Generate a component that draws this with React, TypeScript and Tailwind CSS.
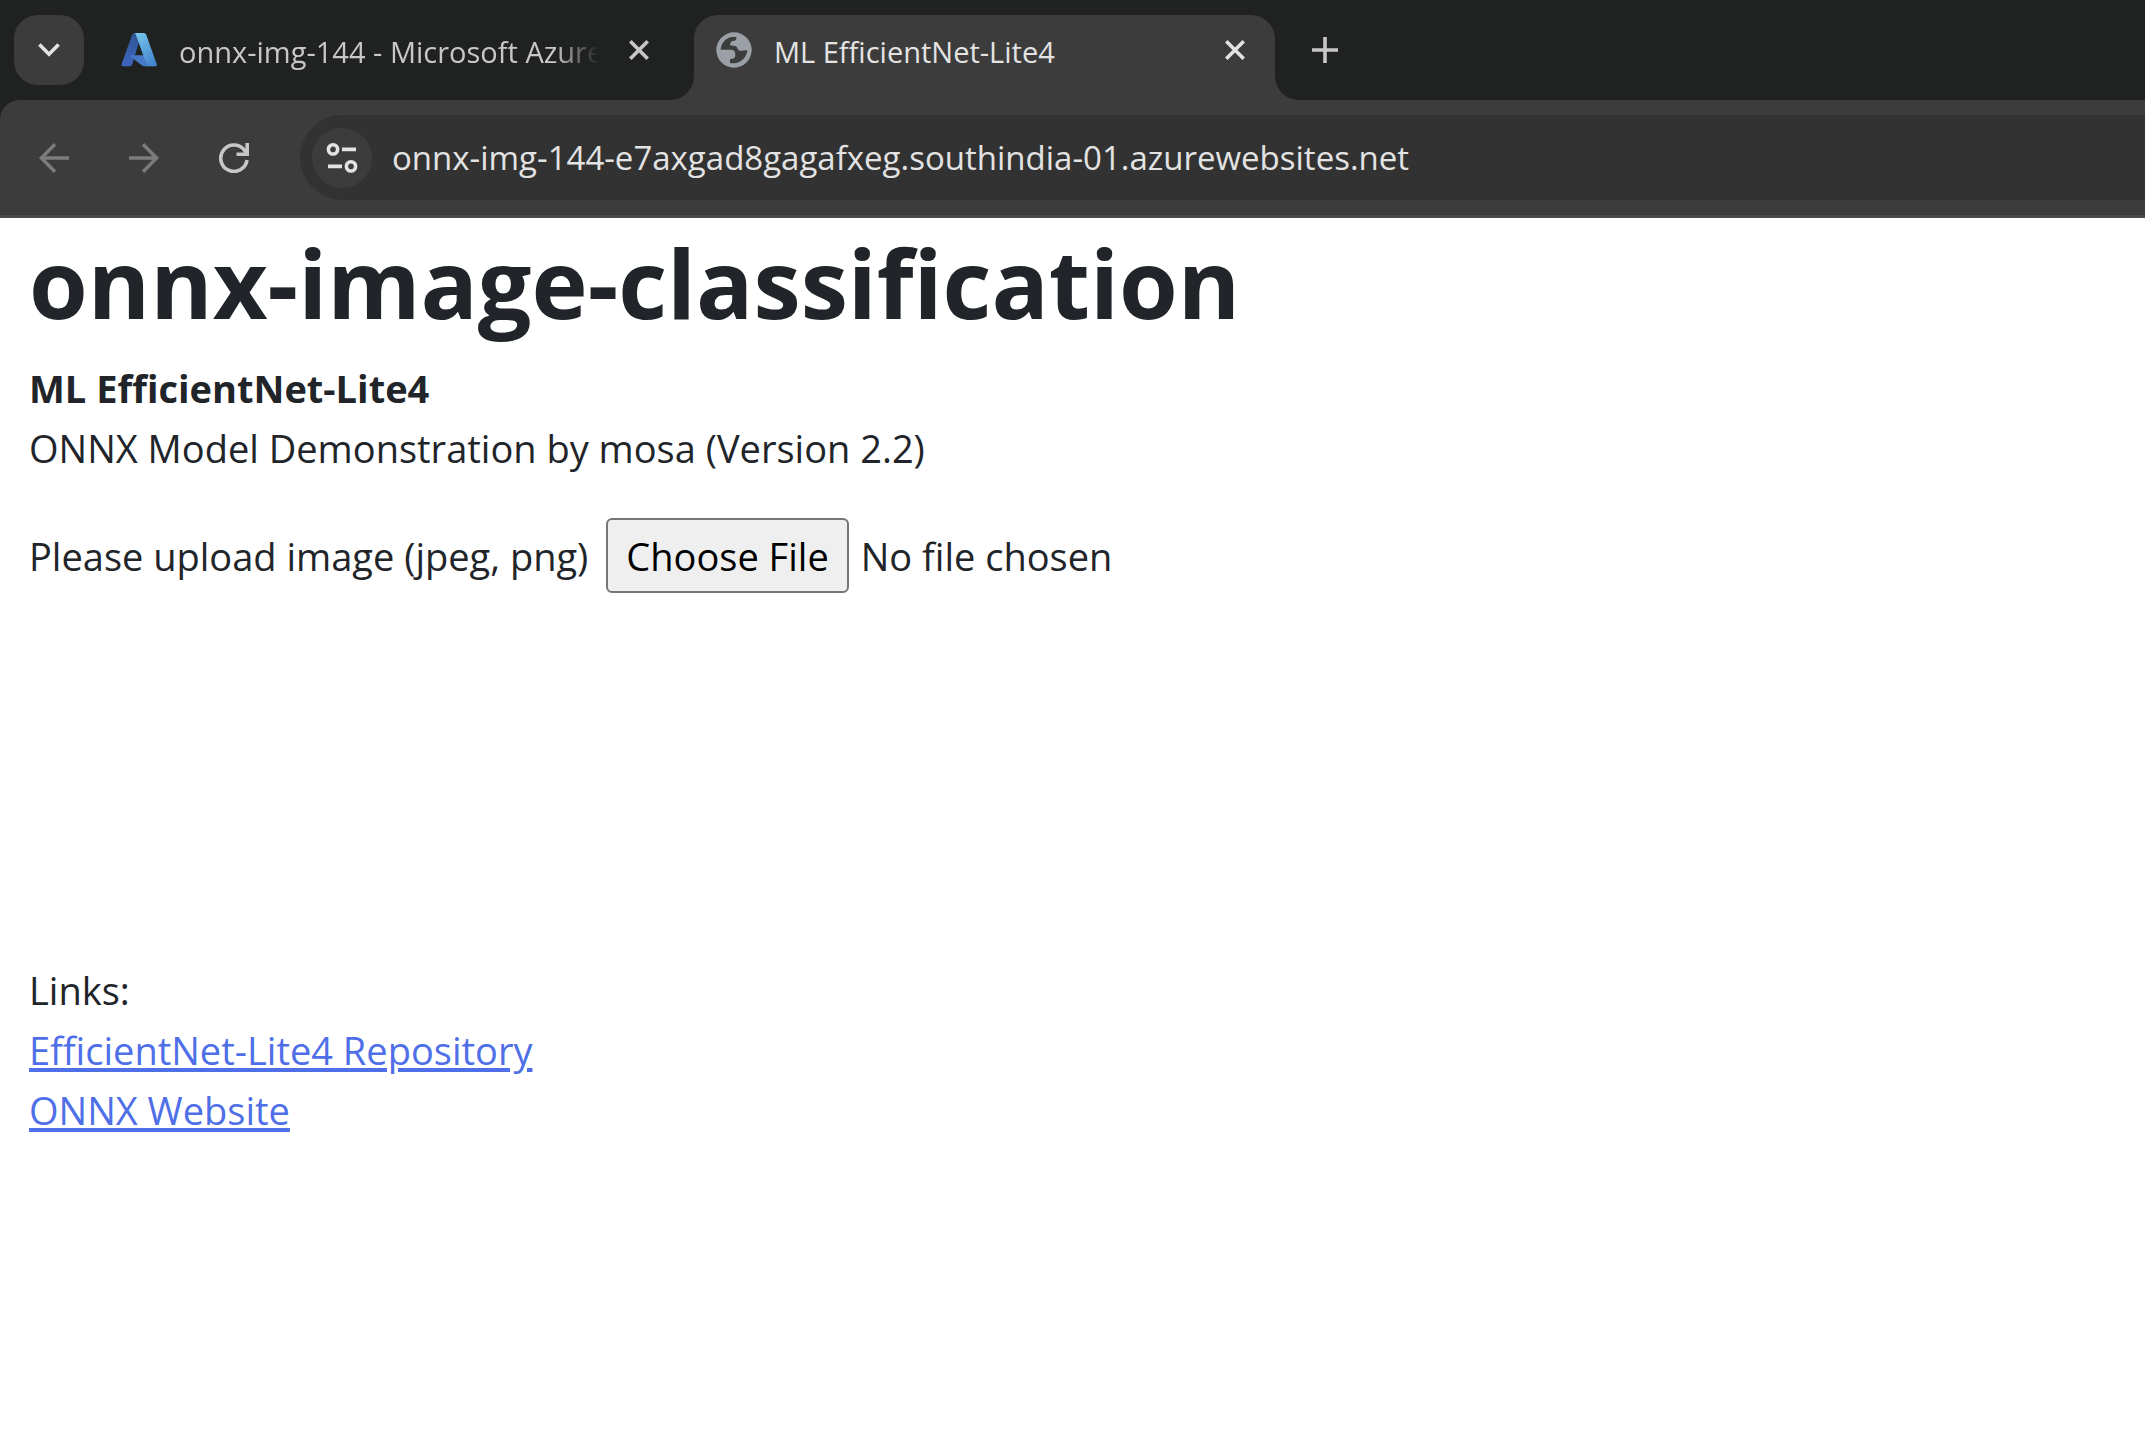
import React from "react";

function AzureLogo() {
  return (
    <svg viewBox="0 0 108 108" className="size-9 shrink-0" aria-hidden="true">
      <defs>
        <linearGradient id="azure-left" x1="0.6" y1="0" x2="0.3" y2="1">
          <stop offset="0" stopColor="#2f5597" />
          <stop offset="1" stopColor="#3f66bd" />
        </linearGradient>
        <linearGradient id="azure-right" x1="0.2" y1="0" x2="0.7" y2="1">
          <stop offset="0" stopColor="#74c3ea" />
          <stop offset="1" stopColor="#4484cf" />
        </linearGradient>
      </defs>
      <path d="M41 3H62L48 50L33 98Q31 103 26 103H5Q0 102 2 96L33 9Q35 3 41 3Z" fill="url(#azure-left)" />
      <path d="M30 70H68L78 103H70Q66 103 62 100L30 75Q27 71 30 70Z" fill="#4779c9" />
      <path d="M41 3H69Q74 3 76 9L107 96Q109 102 103 103H75Q78 100 76 96L45 9Q44 5 41 3Z" fill="url(#azure-right)" />
    </svg>
  );
}

function GlobeIcon() {
  return (
    <svg viewBox="0 0 108 108" className="size-9 shrink-0" aria-hidden="true">
      <circle cx="54" cy="54" r="53" fill="#9aa0a6" />
      <path
        d="M14 53C15 35 28 18 48 15L61 15C62 24 58 27 50 27C44 28 43 34 42 40C46 42 56 41 60 43C66 47 64 54 70 56C78 58 88 53 94 55C93 72 78 92 56 94L42 94L42 81C54 80 58 78 58 68C58 58 54 53 45 53Z"
        fill="#3c3c3c"
      />
    </svg>
  );
}

function CloseIcon() {
  return (
    <svg viewBox="0 0 20 20" className="size-5" fill="none" stroke="currentColor" strokeWidth="3.6" aria-hidden="true">
      <path d="M1.3 1.3L18.7 18.7M18.7 1.3L1.3 18.7" />
    </svg>
  );
}

function TabStrip() {
  return (
    <div className="flex h-[100px] items-start bg-[#202221] pt-[15px]">
      <button
        type="button"
        aria-label="Search tabs"
        className="ml-3.5 flex size-[70px] items-center justify-center rounded-3xl bg-[#3c3c3c] text-[#e3e3e3]"
      >
        <svg viewBox="0 0 22 14" className="h-3.5 w-[22px]" fill="none" stroke="currentColor" strokeWidth="3.6" aria-hidden="true">
          <path d="M1.4 1.6L11 11.2L20.6 1.6" />
        </svg>
      </button>

      <div className="ml-[37px] flex h-[70px] w-[573px] items-center">
        <AzureLogo />
        <span className="ml-[22px] w-[422px] overflow-hidden whitespace-nowrap pt-1 text-[29px] leading-10 text-[#c7c7c7] [mask-image:linear-gradient(to_right,black_375px,transparent_420px)]">
          onnx-img-144 - Microsoft Azure
        </span>
        <button type="button" aria-label="Close onnx-img-144 tab" className="ml-7 text-[#c7c7c7]">
          <CloseIcon />
        </button>
      </div>

      <div className="relative flex h-[85px] w-[581px] items-start rounded-t-3xl bg-[#3c3c3c]">
        <svg viewBox="0 0 24 24" className="absolute -left-6 bottom-0 size-6" aria-hidden="true">
          <path d="M24 0V24H0A24 24 0 0 0 24 0Z" fill="#3c3c3c" />
        </svg>
        <svg viewBox="0 0 24 24" className="absolute -right-6 bottom-0 size-6" aria-hidden="true">
          <path d="M0 0V24H24A24 24 0 0 1 0 0Z" fill="#3c3c3c" />
        </svg>
        <div className="flex h-[70px] w-full items-center pl-[22px] pr-[30px]">
          <GlobeIcon />
          <span className="ml-[22px] flex-1 whitespace-nowrap pt-1 text-[29px] leading-10 text-[#e3e3e3]">
            ML EfficientNet-Lite4
          </span>
          <button type="button" aria-label="Close ML EfficientNet-Lite4 tab" className="text-[#e3e3e3]">
            <CloseIcon />
          </button>
        </div>
      </div>

      <button type="button" aria-label="New tab" className="flex h-[70px] w-[100px] items-center justify-center text-[#c7c7c7]">
        <svg viewBox="0 0 26 26" className="size-[26px]" fill="none" stroke="currentColor" strokeWidth="3.6" aria-hidden="true">
          <path d="M13 0V26M0 13H26" />
        </svg>
      </button>
    </div>
  );
}

function Toolbar() {
  return (
    <div className="bg-[#202221]">
      <div className="flex items-center rounded-tl-[20px] border-b-[3px] border-[#4a4a4a] bg-[#3c3c3c] pb-[15px] pt-[15px]">
        <button type="button" aria-label="Back" className="ml-[39px] text-[#7c7c7c]">
          <svg viewBox="0 0 30 30" className="size-[30px]" fill="none" stroke="currentColor" strokeWidth="3.4" aria-hidden="true">
            <path d="M30 15H2.5M16 1.2L2.4 15L16 28.8" />
          </svg>
        </button>
        <button type="button" aria-label="Forward" className="ml-[60px] text-[#7c7c7c]">
          <svg viewBox="0 0 30 30" className="size-[30px]" fill="none" stroke="currentColor" strokeWidth="3.4" aria-hidden="true">
            <path d="M0 15H27.5M14 1.2L27.6 15L14 28.8" />
          </svg>
        </button>
        <button type="button" aria-label="Reload" className="ml-[60px] text-[#c7c7c7]">
          <svg viewBox="0 0 30 30" className="size-[30px]" fill="none" stroke="currentColor" strokeWidth="3.6" aria-hidden="true">
            <path d="M28 17A13.2 13.2 0 1 1 26 8L27.5 10.2M28.2 0V11.2H17.5" />
          </svg>
        </button>
        <div className="ml-[51px] flex h-[85px] flex-1 items-center rounded-l-full bg-[#323232] pl-3">
          <button
            type="button"
            aria-label="View site information"
            className="flex size-[60px] items-center justify-center rounded-full bg-[#3c3c3c] text-[#e3e3e3]"
          >
            <svg viewBox="0 0 32 30" className="h-[30px] w-8" fill="none" stroke="currentColor" strokeWidth="3.6" aria-hidden="true">
              <circle cx="7" cy="6.4" r="4.6" />
              <circle cx="25" cy="23.4" r="4.6" />
              <path d="M16 6.4H30M2 23.4H16" />
            </svg>
          </button>
          <input
            type="text"
            aria-label="Address"
            defaultValue="onnx-img-144-e7axgad8gagafxeg.southindia-01.azurewebsites.net"
            className="ml-5 min-w-0 flex-1 bg-transparent text-[33px] leading-[50px] text-[#e3e3e3] outline-none"
          />
        </div>
      </div>
    </div>
  );
}

export default function App() {
  return (
    <div className="min-h-screen bg-white font-['Open_Sans','Noto_Sans',sans-serif]">
      <header>
        <TabStrip />
        <Toolbar />
      </header>
      <main className="px-[29px] pt-1 text-[38px] leading-[60px] text-[#212529]">
        <h1 className="text-[95px] font-bold leading-[120px]">onnx-image-classification</h1>
        <p className="mt-4 font-bold">ML EfficientNet-Lite4</p>
        <p>ONNX Model Demonstration by mosa (Version 2.2)</p>
        <div className="mt-10 flex items-center">
          <label htmlFor="image-upload" className="whitespace-nowrap">
            Please upload image (jpeg, png)
          </label>
          <input
            id="image-upload"
            type="file"
            accept="image/jpeg,image/png"
            className="ml-[18px] flex-1 file:mr-3 file:h-[75px] file:rounded-md file:border-2 file:border-solid file:border-[#767676] file:bg-[#efefef] file:px-[18px] file:text-black"
          />
        </div>
        <section className="mt-[367px]">
          <p>Links:</p>
          <ul className="text-[#4f6fe8]">
            <li>
              <a href="#repository" className="underline decoration-4 underline-offset-3">
                EfficientNet-Lite4 Repository
              </a>
            </li>
            <li>
              <a href="#onnx" className="underline decoration-4 underline-offset-3">
                ONNX Website
              </a>
            </li>
          </ul>
        </section>
      </main>
    </div>
  );
}
